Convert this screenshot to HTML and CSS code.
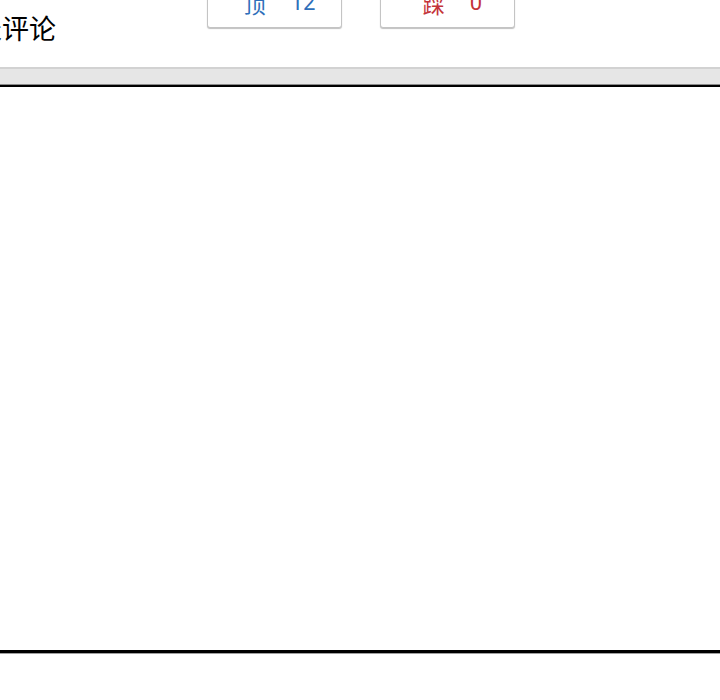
FILE: index.html
```html
<!DOCTYPE html>
<html lang="zh">
<head>
<meta charset="utf-8">
<link rel="stylesheet" href="styles.css">
</head>
<body>
<div class="page">
  <div class="top">
    <h2 class="title">发表评论</h2>
    <div class="votes">
      <button class="vote up"><span class="lbl">顶</span><span class="num">12</span></button>
      <button class="vote down"><span class="lbl">踩</span><span class="num">0</span></button>
    </div>
  </div>
  <div class="bar"></div>
  <div class="box"></div>
  <div class="rule"></div>
</div>
</body>
</html>
```
FILE: styles.css
```css
html, body {
  margin: 0;
  padding: 0;
  background: #ffffff;
  overflow: hidden;
}
body {
  font-family: "Noto Sans CJK SC", "Noto Sans", sans-serif;
  width: 720px;
  height: 700px;
}
.page {
  display: flex;
  flex-direction: column;
}
.top {
  display: flex;
  align-items: flex-start;
  height: 87px;
  margin-top: -20px;
}
.title {
  margin: 34px 0 0 -52px;
  font-size: 27px;
  line-height: 27px;
  font-weight: normal;
  color: #000;
  white-space: nowrap;
}
.votes {
  display: flex;
  gap: 38px;
  margin-left: 151px;
}
.vote {
  width: 135px;
  height: 48px;
  box-sizing: border-box;
  border: 1px solid #c4c4c4;
  border-radius: 3px;
  background: #fff;
  box-shadow: 0 1px 1px rgba(0,0,0,0.25);
  display: flex;
  justify-content: center;
  align-items: center;
  gap: 25px;
  padding: 0 0 3px 10px;
  font-family: "Noto Sans CJK SC", "Noto Sans", sans-serif;
  font-size: 22px;
  line-height: 22px;
}
.vote .num {
  font-family: Roboto, "Noto Sans", sans-serif;
}
.up { color: #2f6fba; }
.down { color: #c4343a; }
.bar {
  height: 15px;
  background: #e6e6e6;
  border-top: 2px solid #d2d2d2;
  border-bottom: 1px solid #8a8a8a;
}
.box {
  height: 563px;
  border-top: 2px solid #000;
  border-bottom: 3px solid #000;
}
.rule {
  height: 1px;
  background: #a0a0a0;
}
```
